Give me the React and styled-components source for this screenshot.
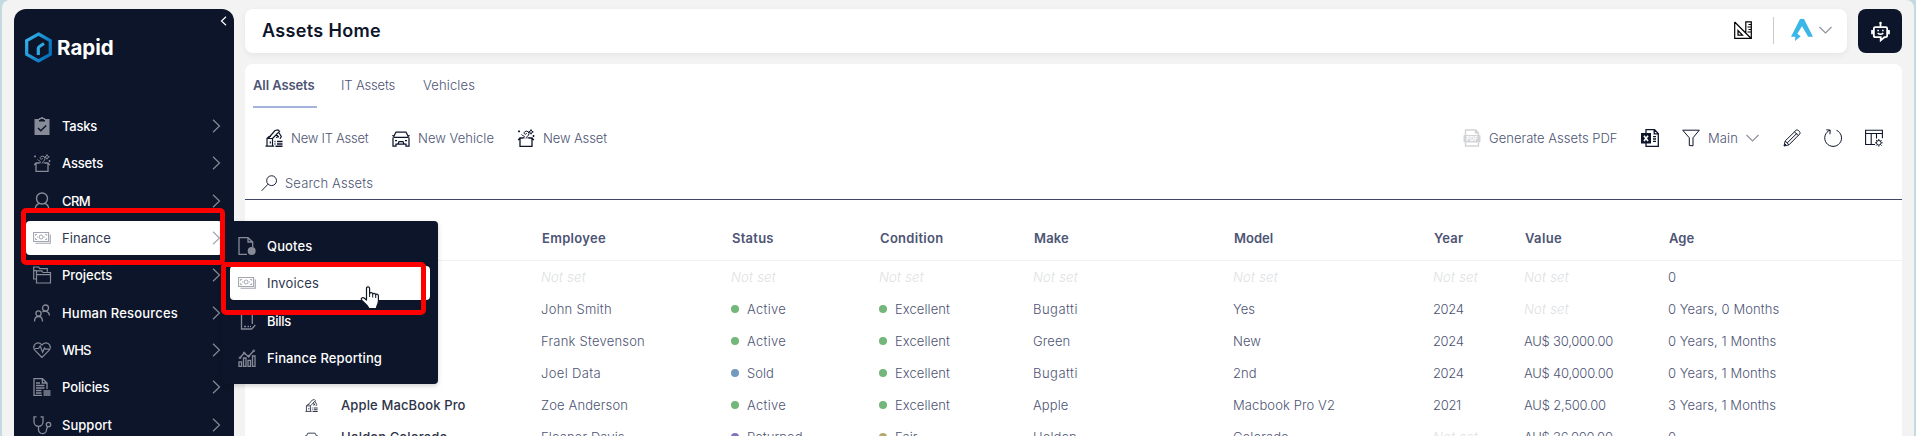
import React from "react";
import styled, { createGlobalStyle } from "styled-components";

const GlobalStyle = createGlobalStyle`
  * { box-sizing: border-box; }
  body { margin: 0; background: #c3dae0; font-family: Inter, "Open Sans", sans-serif; font-size: 13px; overflow: hidden; }
`;

const navy = "#0d152a";
const slate = "#4d5474";

const Text = styled.span`
  letter-spacing: ${(p) => p.$ls || 0}px;
  white-space: nowrap;
`;

const Shell = styled.div`
  position: relative;
  display: flex;
  gap: 11px;
  height: 436px;
  margin: 0 2px;
  padding: 9px 12px 0;
  background: #f3f3f3;
  border-radius: 8px 8px 0 0;
  overflow: hidden;
`;

const Sidebar = styled.aside`
  width: 220px;
  flex: none;
  background: ${navy};
  border-radius: 12px 12px 0 0;
  color: #fff;
`;

const SidebarTop = styled.div`
  display: flex;
  justify-content: space-between;
  height: 100px;
  padding: 7px 7px 0 11px;
`;

const Brand = styled.div`
  display: flex;
  gap: 5px;
  height: 31px;
  margin-top: 16px;
  align-items: center;
  font-size: 20.5px;
  font-weight: 700;
`;

const NavItem = styled.div`
  display: flex;
  align-items: center;
  height: 34px;
  margin: 0 12px 3.33px;
  padding: 0 1px 0 7px;
  border-radius: 4px;
  font-weight: ${(p) => (p.$active ? 400 : 500)};
  color: ${(p) => (p.$active ? "#30384f" : "#fff")};
  background: ${(p) => (p.$active ? "#fff" : "transparent")};
  svg { color: ${(p) => (p.$active ? "#a3a6b1" : "#878b97")}; }
  ${Text} { flex: 1; margin-left: 11px; }
`;

const Flyout = styled.div`
  position: absolute;
  left: 220px;
  top: 221px;
  width: 216px;
  height: 163px;
  padding-top: 8px;
  background: ${navy};
  color: #fff;
  border-radius: 4px;
  box-shadow: 0 2px 5px rgba(0, 0, 0, 0.18);
  ${NavItem} { margin: 0 8px 3.33px; padding-left: 8px; }
`;

const Highlight = styled.div`
  position: absolute;
  left: ${(p) => p.$x}px;
  top: ${(p) => p.$y}px;
  width: ${(p) => p.$w}px;
  height: ${(p) => p.$h}px;
  border: 5px solid #fe0000;
  border-radius: 5px;
`;

const Pointer = styled.svg`
  position: absolute;
  left: 358px;
  top: 286px;
`;

const Main = styled.main`
  flex: 1;
  min-width: 0;
  display: flex;
  flex-direction: column;
  gap: 11px;
`;

const TopRow = styled.div`
  display: flex;
  gap: 11px;
  height: 44px;
  flex: none;
`;

const TitleBar = styled.header`
  flex: 1;
  display: flex;
  align-items: center;
  padding: 0 15px 2px 17px;
  background: #fff;
  border-radius: 8px;
  box-shadow: 0 2px 6px rgba(0, 0, 0, 0.06);
`;

const Title = styled.h1`
  flex: 1;
  margin: 0;
  font-size: 18px;
  font-weight: 600;
  color: ${navy};
`;

const Divider = styled.div`
  width: 1px;
  height: 27px;
  margin: 0 17px 0 21px;
  background: #c9cad0;
`;

const AccountArrow = styled.span`
  display: flex;
  margin-left: 6px;
`;

const BotButton = styled.button`
  display: flex;
  align-items: center;
  justify-content: center;
  width: 44px;
  padding: 0;
  border: 0;
  border-radius: 8px;
  background: ${navy};
  color: #fff;
`;

const Panel = styled.section`
  flex: 1;
  background: #fff;
  border-radius: 8px 8px 0 0;
  color: ${slate};
  font-weight: 300;
`;

const Tabs = styled.nav`
  display: flex;
  height: 44px;
  padding-left: 8px;
`;

const Tab = styled.div`
  width: ${(p) => p.$w}px;
  height: 44px;
  margin-right: ${(p) => p.$gap || 0}px;
  line-height: 43px;
  font-weight: ${(p) => (p.$active ? 600 : 300)};
  border-bottom: 2px solid ${(p) => (p.$active ? "#a4b4dd" : "transparent")};
`;

const Toolbar = styled.div`
  display: flex;
  align-items: center;
  height: 60px;
  padding: 0 19px 0 20px;
  color: ${navy};
`;

const Action = styled.div`
  display: flex;
  align-items: center;
  gap: 8px;
  width: ${(p) => p.$w}px;
  color: ${navy};
  ${Text} { color: ${slate}; padding-bottom: 1px; }
`;

const Spacer = styled.div`
  flex: 1;
`;

const Search = styled.div`
  display: flex;
  align-items: center;
  gap: 7px;
  height: 32px;
  padding: 0 0 1px 16px;
  border-bottom: 1px solid #3f4768;
  color: ${navy};
  ${Text} { color: ${slate}; }
`;

const Row = styled.div`
  display: grid;
  grid-template-columns: 36px 200px 190px 148px 154px 200px 200px 91px 144px 1fr;
  align-items: center;
  height: 32px;
  padding-left: 60px;
`;

const HeadRow = styled(Row)`
  height: 61px;
  padding: 15px 0 0 61px;
  border-bottom: 1px solid #f0f0f1;
  font-weight: 600;
`;

const Cell = styled.div`
  display: flex;
  align-items: center;
  gap: 8px;
  color: ${slate};
`;

const NameCell = styled(Cell)`
  font-weight: 500;
  color: #2c3348;
`;

const Unset = styled(Cell)`
  font-style: italic;
  color: #dedfe3;
`;

const Dot = styled.i`
  width: 8px;
  height: 8px;
  border-radius: 50%;
  background: ${(p) => p.$c};
`;

const drawings = {
  tasks: <><path fill="currentColor" stroke="none" fillRule="evenodd" d="M1.5 2H6V.9H7.4A1.8 1.8 0 0 1 10.6.9H12V2h4.5v16h-15ZM6 3v1.5h6V3h-1.300V1.900H7.300V3Z" /><path stroke="#0d152a" strokeWidth="1.400" d="m5 11 2.800 2.800L13.200 8.500" /></>,
  box: <><path strokeWidth="1.300" d="M3 9v8.300h12V9M6 9H3L1.200 11.200M12 9h3l1.800 2.200M6 8.900h1.500M10.500 8.900H12" /><path d="M9 9.500c0-2 3-2.500 3-5A2.600 2.600 0 0 0 7 3.800c0 1.700 2.600 1.900 2.600.3M4.500 5.500c1 1.500 3 1 3 2.700M1 2.400h2M2 1.400v2M14 .6l.7 1.600 1.600.7-1.600.7L14 5.200l-.7-1.600-1.600-.7 1.600-.7ZM15.500 7h2M16.500 6v2" /></>,
  person: <><circle cx="9" cy="6.500" r="5.500" strokeWidth="1.400" /><path strokeWidth="1.400" d="M2 18c.2-4 2-6 4.600-6.600M16 18c-.2-4-2-6-4.600-6.600" /></>,
  money: <><path d="M.6 3.500h15v9H.6ZM2.500 14.200h14.800V5.500" strokeWidth="1.100" /><path d="M2.500 6.700V5.400h1.600M13.700 6.700V5.400h-1.600M2.500 9.300v1.300h1.600M13.700 9.300v1.300h-1.600" /><circle cx="8.100" cy="8" r="2" /><path d="M4 8h.9M11.300 8h.9" /></>,
  folders: <><path strokeWidth="1.200" d="M3.500 6.500V17h14V6.500H10L8.800 4.800H3.500ZM3.500 8.700h14M3 13H.7V1h5l1 1.700h7.600v3M.7 4.700h3" /></>,
  people: <><circle cx="12.500" cy="4" r="3" strokeWidth="1.300" /><circle cx="5.500" cy="9.500" r="2.600" strokeWidth="1.300" /><path strokeWidth="1.300" d="M1.500 17.500c0-3.500 1.600-5 4-5s4 1.500 4 5M9.500 8c1.600-1.300 6.500-1.400 7 3.500" /></>,
  heart: <><path strokeWidth="1.200" d="M9 16.500 2 9.300C-1 5.500 2 1.600 5.300 1.800 7 1.900 8.200 2.800 9 4c.8-1.200 2-2.100 3.700-2.200C16 1.600 19 5.500 16 9.300ZM2 7.500h3.500L7.200 5l2.500 6.200L11.500 7l1 1.200H16" /></>,
  policy: <><path strokeWidth="1.300" d="M9 17.300H1V.7h8.500L14 5v6M9.300.9V5H14" /><path d="M3 5h4M3 7.500h8.500M3 10h8.500M3 12.500h5.500M3 15h5.500M10.500 13h7M10.500 15h7M10.500 17h7" strokeWidth="1.300" /></>,
  steth: <><path strokeWidth="1.300" d="M3.500.8H1v5a4.500 4.500 0 0 0 9 0v-5H7.500M5.500 10.500v3a4 4 0 0 0 8 .3c0-1.300.5-2 1.300-2.800" /><circle cx="15.500" cy="8.500" r="2.200" strokeWidth="1.300" /></>,
  quote: <><path strokeWidth="1.300" d="M9 17.300H1V.7h9L14.700 5v5M10 .9V5h4.700" /><circle cx="13.700" cy="14" r="4" fill="currentColor" stroke="none" /></>,
  bill: <path strokeWidth="1.300" d="M3.500 1v16h10.200l3.600-4M14.300 1v11M6 14.500h2M9.500 14.500h1.500M12 14.500h1" />,
  report: <><path strokeWidth="1.300" d="M1 17.300v-4.500h2.500v4.500ZM5.500 17.300V9H8v8.300ZM10 17.300v-6h2.500v6ZM14.500 17.300V7H17v10.300ZM2 9l4-5 4.500 3.500L15.500 2" /><circle cx="2" cy="8.800" r=".9" /><circle cx="6.200" cy="4" r=".9" /><circle cx="10.700" cy="7.300" r=".9" /><circle cx="15.800" cy="1.800" r=".9" /></>,
  itasset: <><path strokeWidth="1.200" d="M.5 17.200h8.700M2 17V9.500h5.500V17M2 9.500 4 7.500h2M3.500 9 10 1.500l3-.7 1.500 1.500L7.500 9.500M13.500 3l2.800 4.500-1.300 2.300M11.500 4.500l2 4M11 8.500l3-1M5.300 12.500v2" /><path strokeWidth="1.400" d="M9.500 12.500h1M9.500 15h1M12 12.500h5.500M12 15h5.500M10.500 17.300h7" /></>,
  car: <path strokeWidth="1.250" d="M1 8.500v8.700h3v-2h10v2h3V8.500M1.500 8 4 3h10l2.500 5M.3 6.500 2 7.200M17.700 6.500 16 7.200M1.500 8.300h15M3 11.500h2M13 11.500h2M6 15l1-2.500h4l1 2.500" />,
  pdf: <><path strokeWidth="1.400" d="M2.500 6V1h10.300L15.500 4v2M2.500 13.500V17h13v-3.500M12.500 1v3h3" /><rect x=".5" y="6" width="17" height="7.500" fill="currentColor" stroke="none" rx="1" /><text x="9" y="11.900" textAnchor="middle" fontSize="5.800" fontWeight="800" fill="#fff" stroke="none">PDF</text></>,
  excel: <><path strokeWidth="1.300" d="M5 4V.7h8.500L17.300 4.500v12.800H5V14M13.200.9v4h4M12 7.700h3M12 10h3M12 12.300h3" /><rect y="4" width="10" height="10.500" fill="currentColor" stroke="none" /><path stroke="#fff" strokeWidth="1.600" d="m3 6.700 4 5.200M7 6.700l-4 5.200" /></>,
  filter: <path d="M.7 1.200h16.600L11 8.800v8L7.300 16.500V8.800Z" />,
  pencil: <path d="m1 17 1.200-5L13 1.300c1.500-1.500 5.200 2 3.700 3.700L6 15.800ZM2.200 12 6 15.800M11.500 2.900l3.700 3.700M4.300 13.900 14 4.200M1 17l2-2" />,
  refresh: <path d="M6 1.200A8.400 8.400 0 1 0 12.500 1.300M2.300.8l3.900.3-.3 4.200" />,
  columns: <><path d="M10 15.500H.6V1.300h16.800v8M.6 4.500h16.800M6.200 4.500v11M11.500 4.500v5" strokeWidth="1.100" /><circle cx="13.800" cy="13.800" r="2.300" /><path d="M13.800 10v1.300M13.800 16.300v1.300M10 13.800h1.300M16.300 13.800h1.300M11.100 11.100l.9.900M15.700 15.700l.9.900M16.500 11.100l-.9.900M12 15.700l-.9.900" /></>,
  ruler: <><path strokeWidth="1.200" d="M.7 1v16.300h16.600V.8h-5.500v10.700M.7 1l16 16M4 9.500v4.700h4.500Z" /><path d="M14.500 3.500h2.500M13.500 6h3.500M14.500 8.500h2.500M13.500 11h3.500" /></>,
  search: <><circle cx="11.200" cy="6" r="5.200" /><path d="M7.500 9.700 .7 16.700" /></>,
  bot: <><path strokeWidth="1.700" d="M4 4.800h10q1.300 0 1.300 1.300v7q0 1.300-1.300 1.300h-1.300l-3.500 3v-3H4q-1.300 0-1.300-1.300v-7Q2.700 4.800 4 4.800Z" /><path strokeWidth="1.700" d="M9 4.500V1.500M1 7.500v4M17 7.500v4" /><path strokeWidth="1.400" d="M6.300 10.500q2.700 2.300 5.400 0" /><circle cx="9" cy="1" r="1.200" fill="currentColor" stroke="none" /><path strokeWidth="1.500" d="M6 8h1.500M10.500 8H12" /></>,
};

const Icon = ({ name, size = 18, color }) => (
  <svg width={size} height={size} viewBox="0 0 18 18" fill="none" stroke="currentColor" color={color} overflow="visible">
    {drawings[name]}
  </svg>
);

const Chevron = ({ w, h, d, color }) => (
  <svg width={w} height={h} viewBox={`0 0 ${w} ${h}`} fill="none" stroke={color || "currentColor"} strokeWidth="1.2">
    <path d={d} />
  </svg>
);
const Down = () => <Chevron w={13} h={8} d="m.5 1 6 6 6-6" color="#8f929e" />;

const BrandMark = () => (
  <svg width="27" height="31" viewBox="0 0 27 31" fill="none">
    <defs>
      <linearGradient id="mark" x1="0" y1="0" x2="1" y2="0.6">
        <stop offset="0" stopColor="#36b7ee" />
        <stop offset="1" stopColor="#0672bd" />
      </linearGradient>
    </defs>
    <path d="M13.500 2 25.300 8.700v13.600L13.500 29 1.700 22.300V8.700Z" stroke="url(#mark)" strokeWidth="3.200" />
    <path d="M13.300 23v-6.500q0-1.200 1.200-2l4.500-3" stroke="#2da9e4" strokeWidth="3.200" />
  </svg>
);

const AccountMark = () => (
  <svg width="22" height="22" viewBox="0 0 22 22" fill="#3ab7e8">
    <path d="M9 0h4l9 17.700h-4.800L11 7.200 6.300 14.800l3.400 2.400L4 22l.4-4.300H0Z" />
  </svg>
);

const nav = [
  ["tasks", "Tasks", -0.24],
  ["box", "Assets", -0.19],
  ["person", "CRM", -0.6],
  ["money", "Finance", 0.07, true],
  ["folders", "Projects", -0.05],
  ["people", "Human Resources", 0.19],
  ["heart", "WHS", -0.9],
  ["policy", "Policies", -0.1],
  ["steth", "Support", 0.03],
];

const flyout = [
  ["quote", "Quotes", 0.15],
  ["money", "Invoices", 0.14, true],
  ["bill", "Bills", -0.3],
  ["report", "Finance Reporting", 0.11],
];

const heads = [["Employee", 0.3], ["Status", 0.25], ["Condition", 0.3], ["Make", 0.15], ["Model", 0], ["Year", 0.25], ["Value", 0.37], ["Age", 0]];

const green = "#74b77b";
const rows = [
  [null, null, null, null, null, null, null, null, null, "0"],
  [null, null, "John Smith", ["Active", green], ["Excellent", green], "Bugatti", "Yes", "2024", null, "0 Years, 0 Months"],
  [null, null, "Frank Stevenson", ["Active", green], ["Excellent", green], "Green", "New", "2024", "AU$ 30,000.00", "0 Years, 1 Months"],
  [null, null, "Joel Data", ["Sold", "#7399bd"], ["Excellent", green], "Bugatti", "2nd", "2024", "AU$ 40,000.00", "0 Years, 1 Months"],
  ["itasset", "Apple MacBook Pro", "Zoe Anderson", ["Active", green], ["Excellent", green], "Apple", "Macbook Pro V2", "2021", "AU$ 2,500.00", "3 Years, 1 Months"],
  ["car", "Holden Colorado", "Eleanor Davis", ["Returned", "#7d74bd"], ["Fair", "#b3a96f"], "Holden", "Colorado", null, "AU$ 36,000.00", "0"],
];

const spacing = {
  "John Smith": 0.28, "Frank Stevenson": 0.22, "Joel Data": 0.35, "Zoe Anderson": 0.13,
  Active: 0.27, Sold: 0.05, Excellent: 0.08, Bugatti: 0.49, "Macbook Pro V2": 0.1,
  2024: -0.37, 2021: -0.3, "AU$ 30,000.00": -0.23, "AU$ 40,000.00": -0.23, "AU$ 2,500.00": -0.2, "AU$ 36,000.00": -0.23,
};

const Value = ({ value }) => {
  if (value === null) return <Unset><Text $ls={0.25}>Not set</Text></Unset>;
  const [label, tone] = Array.isArray(value) ? value : [value];
  return (
    <Cell>
      {tone && <Dot $c={tone} />}
      <Text $ls={spacing[label] ?? 0.08}>{label}</Text>
    </Cell>
  );
};

const NavEntry = ({ icon, label, ls, active, arrow }) => (
  <NavItem $active={active}>
    <Icon name={icon} />
    <Text $ls={ls}>{label}</Text>
    {arrow && <Chevron w={9} h={14} d="m1 .7 6.500 6.300L1 13.300" />}
  </NavItem>
);

export default function App() {
  return (
    <>
      <GlobalStyle />
      <Shell>
        <Sidebar>
          <SidebarTop>
            <Brand><BrandMark /><Text $ls={0.02}>Rapid</Text></Brand>
            <Chevron w={7} h={10} d="M6 .8 1.500 5 6 9.200" />
          </SidebarTop>
          {nav.map(([icon, label, ls, active]) => (
            <NavEntry key={label} icon={icon} label={label} ls={ls} active={active} arrow />
          ))}
        </Sidebar>
        <Main>
          <TopRow>
            <TitleBar>
              <Title><Text $ls={0.34}>Assets Home</Text></Title>
              <Icon name="ruler" />
              <Divider />
              <AccountMark />
              <AccountArrow><Down /></AccountArrow>
            </TitleBar>
            <BotButton><Icon name="bot" size={19} /></BotButton>
          </TopRow>
          <Panel>
            <Tabs>
              <Tab $active $w={64} $gap={24}><Text $ls={-0.1}>All Assets</Text></Tab>
              <Tab $w={54} $gap={28}><Text $ls={-0.15}>IT Assets</Text></Tab>
              <Tab $w={54}><Text $ls={0.14}>Vehicles</Text></Tab>
            </Tabs>
            <Toolbar>
              <Action $w={127}><Icon name="itasset" /><Text $ls={-0.24}>New IT Asset</Text></Action>
              <Action $w={125}><Icon name="car" /><Text $ls={0.04}>New Vehicle</Text></Action>
              <Action><Icon name="box" /><Text $ls={-0.11}>New Asset</Text></Action>
              <Spacer />
              <Action $w={178}><Icon name="pdf" color="#d2d3d6" /><Text $ls={0.02}>Generate Assets PDF</Text></Action>
              <Action $w={41}><Icon name="excel" /></Action>
              <Action $w={101}><Icon name="filter" /><Text $ls={0.12}>Main</Text><Down /></Action>
              <Action $w={41}><Icon name="pencil" /></Action>
              <Action $w={41}><Icon name="refresh" /></Action>
              <Icon name="columns" />
            </Toolbar>
            <Search><Icon name="search" size={17} /><Text $ls={0.14}>Search Assets</Text></Search>
            <HeadRow>
              <Cell /><Cell />
              {heads.map(([label, ls]) => <Cell key={label}><Text $ls={ls}>{label}</Text></Cell>)}
            </HeadRow>
            {rows.map(([icon, name, ...values], i) => (
              <Row key={i}>
                <NameCell>{icon && <Icon name={icon} size={13} />}</NameCell>
                <NameCell><Text $ls={0.13}>{name}</Text></NameCell>
                {values.map((value, j) => <Value key={j} value={value} />)}
              </Row>
            ))}
          </Panel>
        </Main>
        <Flyout>
          {flyout.map(([icon, label, ls, active]) => (
            <NavEntry key={label} icon={icon} label={label} ls={ls} active={active} />
          ))}
        </Flyout>
        <Highlight $x={19} $y={208} $w={204} $h={57} />
        <Highlight $x={219} $y={262} $w={205} $h={53} />
        <Pointer width="20" height="24" viewBox="0 0 20 24">
          <path fill="#fff" stroke="#111827" strokeWidth="1.200" strokeLinejoin="round" d="M6.500 14V2.500Q6.500.8 8 .8t1.600 1.700V8q0-1.500 1.600-1.300t1.500 1.600q.2-1.300 1.600-1t1.500 1.700q.2-1 1.300-.8t1.300 1.500V15q0 2.500-1.300 4.500l-.8 3H9L7.500 20 2 14.500q-1.500-1.700-.2-2.500t2.700.3Z" />
          <path stroke="#111827" strokeWidth="1" d="M9.600 8v3M12.700 8.500V11.500M15.700 9V12" />
        </Pointer>
      </Shell>
    </>
  );
}
